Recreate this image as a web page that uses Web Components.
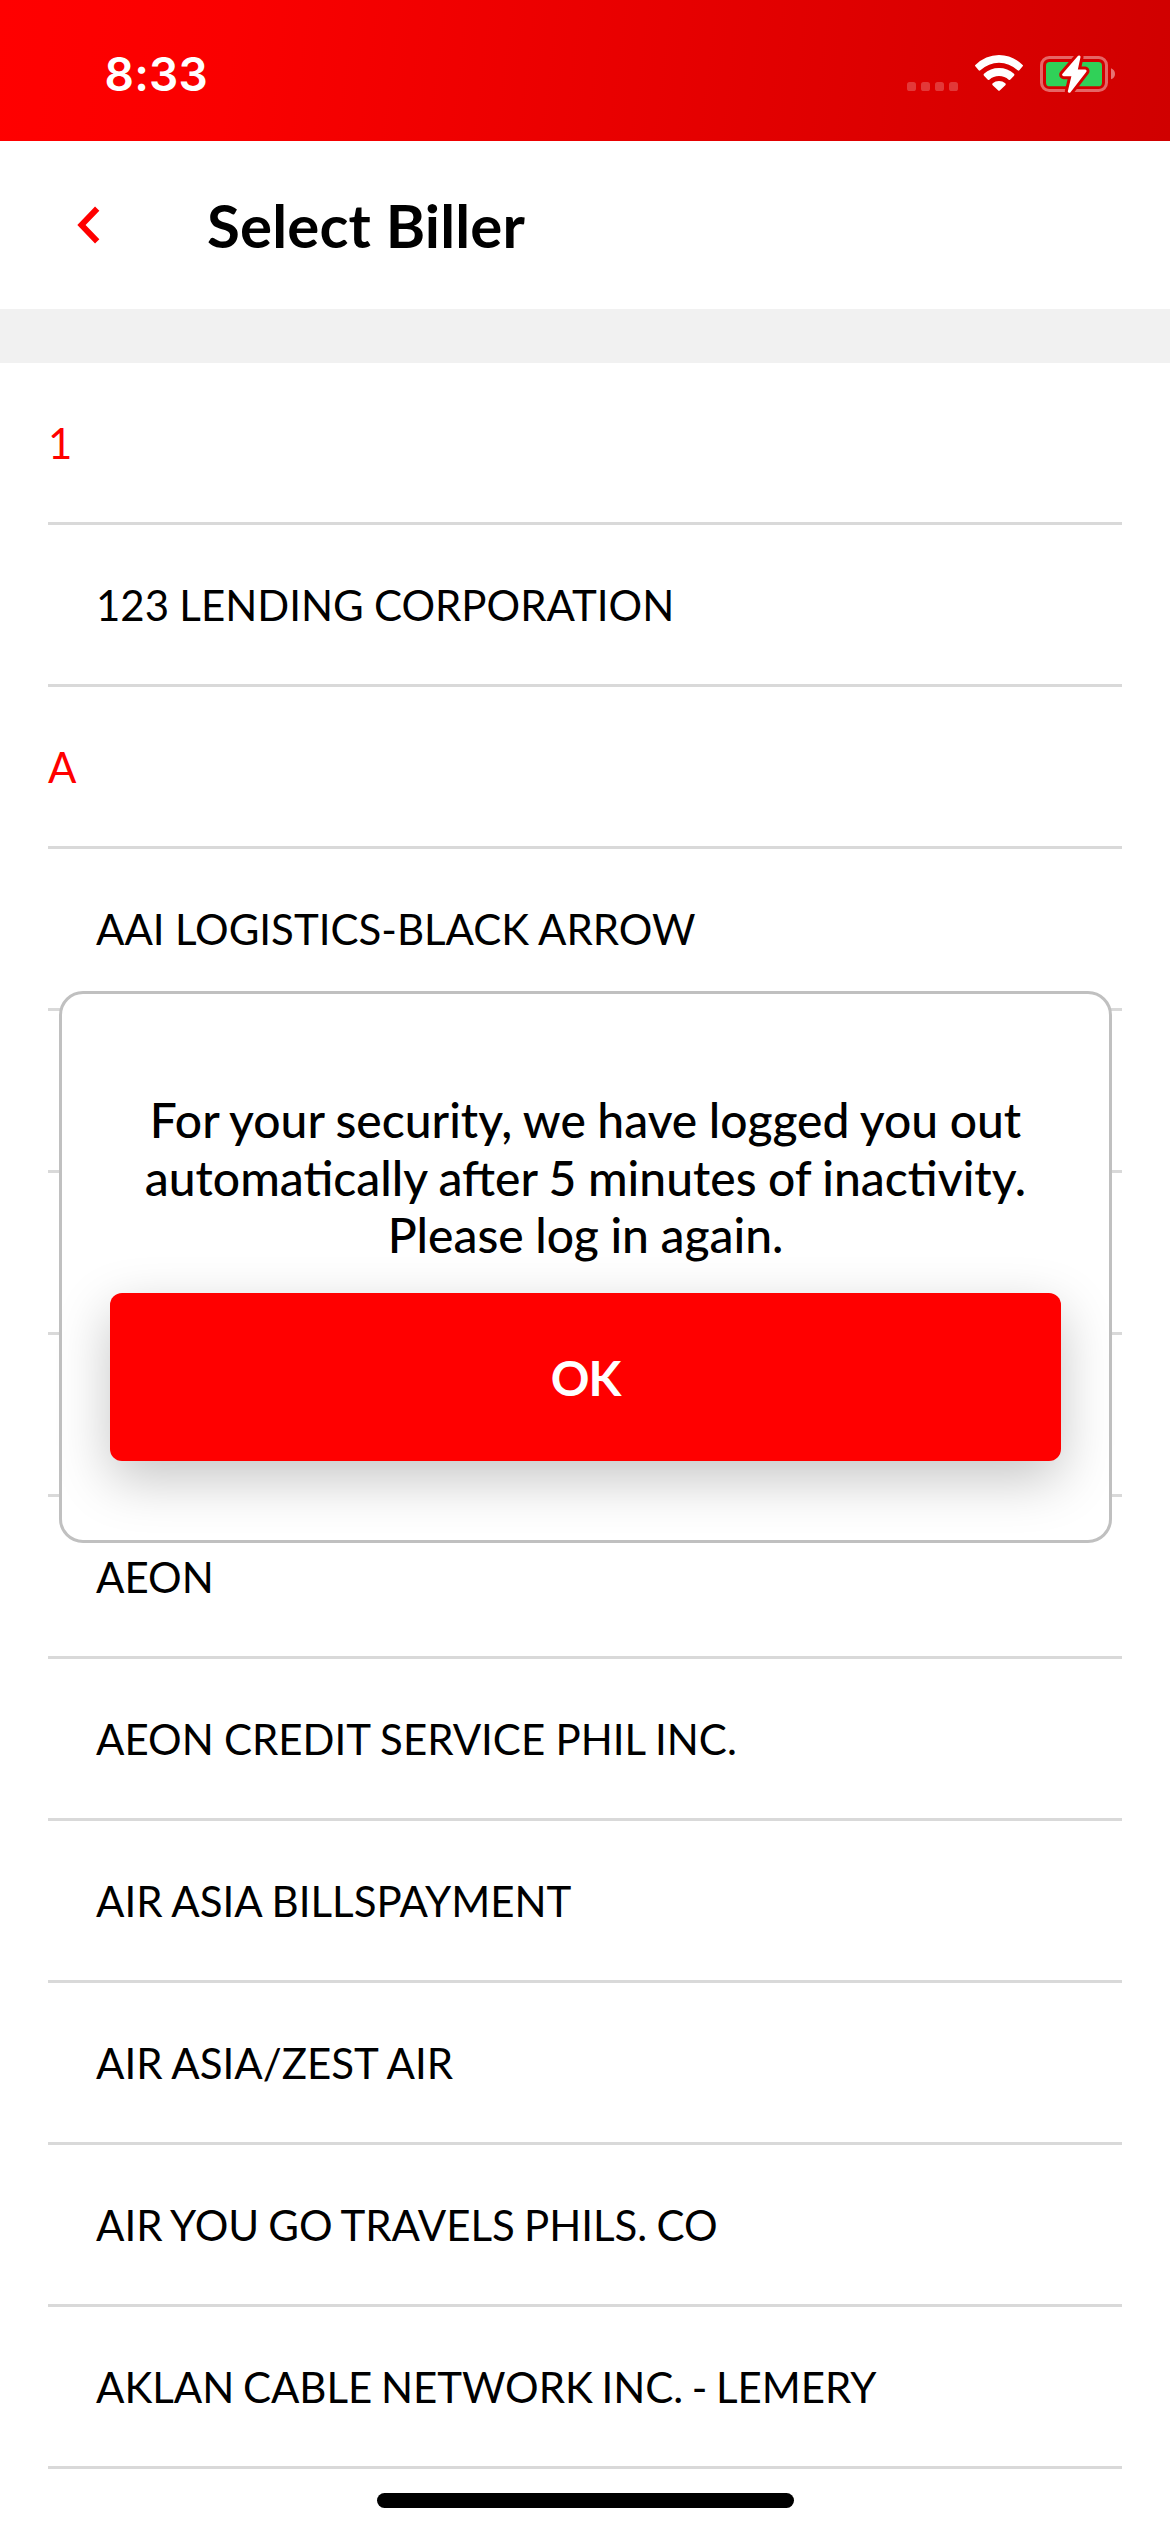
<!DOCTYPE html>
<html lang="en">
<head>
<meta charset="utf-8">
<title>Select Biller</title>
<style>
  html, body { margin: 0; padding: 0; background: #fff; }
  body { width: 1170px; height: 2532px; overflow: hidden; font-family: Lato, sans-serif; color: #000; }
</style>
</head>
<body>
<biller-screen></biller-screen>
<script>
  const define = (name, html) => {
    const template = document.createElement('template');
    template.innerHTML = html;
    customElements.define(name, class extends HTMLElement {
      constructor() {
        super();
        this.attachShadow({ mode: 'open' }).append(template.content.cloneNode(true));
      }
    });
  };

  define('status-bar', `
    <style>
      :host { display: flex; align-items: flex-start; justify-content: space-between; box-sizing: border-box;
        height: 141px; padding: 55px 55px 0 104.500px; color: #fff;
        background: linear-gradient(97deg, #ff0000 0%, #fa0000 20%, #d00000 100%); }
      time { font: 600 46px/39px Inter, sans-serif; letter-spacing: .2px; }
      .icons { display: flex; gap: 17px; }
      svg { display: block; }
    </style>
    <time>8:33</time>
    <div class="icons">
      <svg width="51" height="38" viewBox="0 0 51 38" fill="#fff" fill-opacity=".22">
        <rect y="27" width="9" height="9" rx="2.6"/><rect x="14" y="27" width="9" height="9" rx="2.6"/>
        <rect x="28" y="27" width="9" height="9" rx="2.6"/><rect x="42" y="27" width="9" height="9" rx="2.6"/>
      </svg>
      <svg width="48" height="38" viewBox="285 75 144 114" fill="#fff">
        <path d="M286 105Q317 75 357 75T428 105Q430 107 428 109L418 121Q416 123 413 121Q388 98 357 98T301 121Q298 123 296 121L286 109Q284 107 286 105Z"/>
        <path d="M312 131Q331 114 357 114T402 131Q405 134 402 137L392 148Q389 151 386 149Q374 138 357 138T328 149Q325 151 322 148L312 137Q309 134 312 131Z"/>
        <path d="M338 160Q346 153 357 153T376 160Q379 163 376 166L360 181Q357 184 354 181L338 166Q335 163 338 160Z"/>
      </svg>
      <svg width="75" height="38" viewBox="480 75 225 114">
        <rect x="484.500" y="82.500" width="195" height="99" rx="23" fill="none" stroke="#fff" stroke-opacity=".4" stroke-width="9"/>
        <rect x="498" y="96" width="168" height="73" rx="11" fill="#30d158"/>
        <path d="M693 115Q705 120 705 132T693 148Z" fill="#fff" fill-opacity=".45"/>
        <path d="M597 81L551 134H580L568 184L615 123H588Z" fill="#d70000" stroke="#d70000" stroke-width="27" stroke-linejoin="round"/>
        <path d="M597 81L551 134H580L568 184L615 123H588Z" fill="#fff" stroke="#fff" stroke-width="9" stroke-linejoin="round"/>
      </svg>
    </div>`);

  define('page-header', `
    <style>
      :host { display: flex; align-items: center; box-sizing: border-box; height: 168px; padding-left: 75px;
        background: #fff; }
      svg { display: block; margin-right: 102px; }
      h1 { margin: 0; font-size: 60px; line-height: 72px; font-weight: 700; letter-spacing: .15px; white-space: nowrap; }
    </style>
    <svg width="30" height="42" viewBox="0 0 30 42" fill="none" stroke="#f00" stroke-width="6"><path d="M22.200 4.700L6.500 21L22.200 37.300"/></svg>
    <h1><slot></slot></h1>`);

  define('list-row', `
    <style>
      :host { display: flex; align-items: center; box-sizing: border-box; height: 162px; margin: 0 48px;
        padding-left: 48px; border-bottom: 3px solid #d9d9d9; font-size: 42px; line-height: 50px;
        word-spacing: -.5px; white-space: nowrap; }
      :host([heading]) { padding-left: 0; color: #f00; }
      :host([snug]) { word-spacing: -1.600px; }
      :host([tight]) { word-spacing: -2.200px; }
    </style>
    <span><slot></slot></span>`);

  define('action-button', `
    <style>
      :host { display: flex; align-items: center; justify-content: center; box-sizing: border-box; height: 168px;
        padding-top: 2px; border-radius: 12px; background: #f00; color: #fff; font-size: 48px; line-height: 58px; font-weight: 700;
        letter-spacing: -1px; box-shadow: 0 18px 54px rgba(0, 0, 0, .23); }
    </style>
    <span><slot></slot></span>`);

  define('alert-dialog', `
    <style>
      :host { position: absolute; left: 59px; top: 991px; width: 1053px; height: 552px; box-sizing: border-box;
        border: 3px solid #c0c0c0; border-radius: 24px; background: #fff; padding: 97px 48px 0; }
      p { margin: 0 0 29px; font-size: 48px; line-height: 57.600px; font-weight: 500; word-spacing: -.6px; text-align: center; }
    </style>
    <p><slot name="message"></slot></p>
    <slot></slot>`);

  define('home-indicator', `
    <style>
      :host { display: flex; justify-content: center; padding-top: 24px; }
      i { width: 417px; height: 15px; border-radius: 8px; background: #000; }
    </style><i></i>`);

  define('biller-screen', `
    <style>
      :host { display: flex; flex-direction: column; position: relative; height: 2532px; background: #fff; }
      .band { height: 54px; background: #f1f1f1; }
      .line { display: block; white-space: nowrap; }
    </style>
    <status-bar></status-bar>
    <page-header>Select Biller</page-header>
    <div class="band"></div>
    <list-row heading>1</list-row>
    <list-row>123 LENDING CORPORATION</list-row>
    <list-row heading>A</list-row>
    <list-row>AAI LOGISTICS-BLACK ARROW</list-row>
    <list-row></list-row>
    <list-row></list-row>
    <list-row></list-row>
    <list-row>AEON</list-row>
    <list-row>AEON CREDIT SERVICE PHIL INC.</list-row>
    <list-row>AIR ASIA BILLSPAYMENT</list-row>
    <list-row>AIR ASIA/ZEST AIR</list-row>
    <list-row snug>AIR YOU GO TRAVELS PHILS. CO</list-row>
    <list-row tight>AKLAN CABLE NETWORK INC. - LEMERY</list-row>
    <home-indicator></home-indicator>
    <alert-dialog>
      <span class="line" slot="message">For your security, we have logged you out</span>
      <span class="line" slot="message">automatically after 5 minutes of inactivity.</span>
      <span class="line" slot="message">Please log in again.</span>
      <action-button>OK</action-button>
    </alert-dialog>`);
</script>
</body>
</html>
